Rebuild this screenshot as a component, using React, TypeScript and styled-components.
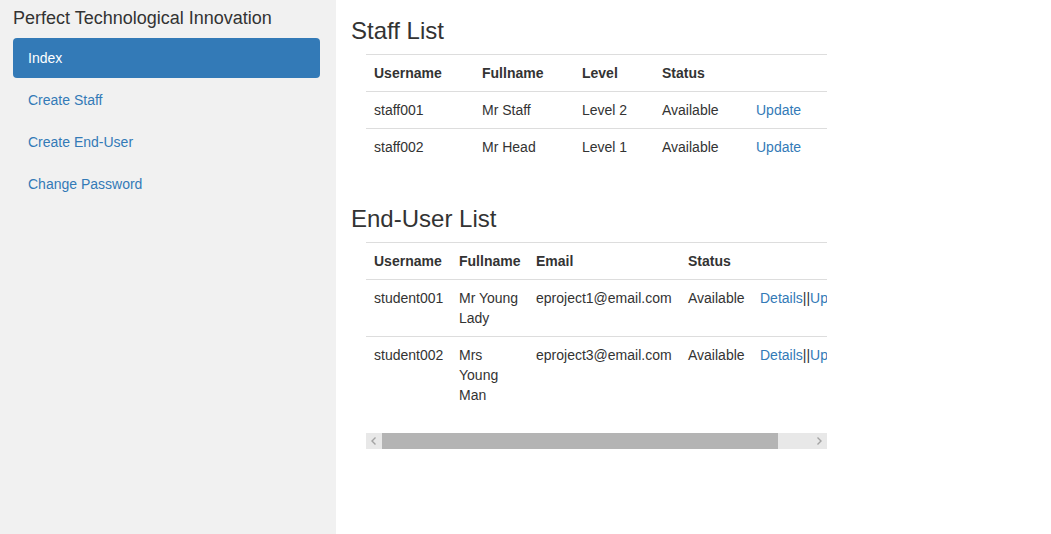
import styled, { createGlobalStyle } from "styled-components"

const GlobalStyle = createGlobalStyle`
    html, body {
        margin: 0;
        padding: 0;
        height: 100%;
    }
    body {
        font-family: "Liberation Sans", Arial, Helvetica, sans-serif;
        font-size: 14px;
        line-height: 20px;
        color: #333;
        background: #fff;
    }
    #root {
        height: 100%;
    }
`

const Page = styled.div`
    display: flex;
    min-height: 100vh;
`

const Sidebar = styled.aside`
    width: 336px;
    flex-shrink: 0;
    background: #f1f1f1;
    padding: 8px 16px 0 13px;
    box-sizing: border-box;
`

const Brand = styled.div`
    font-size: 18px;
    line-height: 20px;
    color: #333;
`

const Nav = styled.ul`
    list-style: none;
    margin: 10px 0 0;
    padding: 0;
`

const NavItem = styled.li`
    & + & {
        margin-top: 2px;
    }
`

const NavLink = styled.a<{ $active?: boolean }>`
    display: block;
    padding: 10px 15px;
    border-radius: 4px;
    text-decoration: none;
    color: ${props => (props.$active ? "#fff" : "#337ab7")};
    background: ${props => (props.$active ? "#337ab7" : "transparent")};
`

const Main = styled.main`
    flex: 1;
    padding-left: 15px;
    display: flow-root;
`

const Heading = styled.h3<{ $first?: boolean }>`
    font-size: 24px;
    font-weight: 500;
    line-height: 26px;
    margin: ${props => (props.$first ? "18px" : "21px")} 0 10px;
    color: #333;
`

const TableWrap = styled.div`
    width: 461px;
    margin-left: 15px;
    display: flow-root;
`

const TableViewport = styled.div`
    overflow: hidden;
`

const Table = styled.table<{ $width: number }>`
    width: ${props => props.$width}px;
    table-layout: fixed;
    border-collapse: collapse;
    border-spacing: 0;
    margin-bottom: 20px;
`

const Cell = styled.td`
    padding: 8px;
    border-top: 1px solid #ddd;
    vertical-align: top;
    text-align: left;
`

const HeadCell = styled(Cell).attrs({ as: "th" })`
    font-weight: bold;
`

const Link = styled.a`
    color: #337ab7;
    text-decoration: none;
`

const ScrollBar = styled.div`
    display: flex;
    height: 16px;
    background: #e8e8e8;
`

const ScrollButton = styled.div`
    width: 16px;
    flex-shrink: 0;
    display: flex;
    align-items: center;
    justify-content: center;
`

const ScrollTrack = styled.div`
    flex: 1;
    display: flex;
`

const ScrollThumb = styled.div`
    background: #b4b4b4;
    height: 100%;
`

const Chevron = ({ dir }: { dir: "left" | "right" }) => (
    <svg width="16" height="16" viewBox="0 0 16 16">
        <path
            d={dir === "left" ? "M9.5 4.5 6 8l3.5 3.5" : "M6.5 4.5 10 8l-3.5 3.5"}
            fill="none"
            stroke="#a3a3a3"
            strokeWidth="1.4"
        />
    </svg>
)

const staff = [
    { username: "staff001", fullname: "Mr Staff", level: "Level 2", status: "Available" },
    { username: "staff002", fullname: "Mr Head", level: "Level 1", status: "Available" },
]

const endUsers = [
    { username: "student001", fullname: "Mr Young Lady", email: "eproject1@email.com", status: "Available" },
    { username: "student002", fullname: "Mrs Young Man", email: "eproject3@email.com", status: "Available" },
]

const staffCols = [108, 100, 80, 94, 79]
const userCols = [85, 77, 152, 72, 113]
const viewWidth = 461
const userTableWidth = userCols.reduce((a, b) => a + b, 0)

export default function App() {
    return (
        <>
            <GlobalStyle />
            <Page>
                <Sidebar>
                    <Brand>Perfect Technological Innovation</Brand>
                    <Nav>
                        <NavItem><NavLink href="#" $active>Index</NavLink></NavItem>
                        <NavItem><NavLink href="#">Create Staff</NavLink></NavItem>
                        <NavItem><NavLink href="#">Create End-User</NavLink></NavItem>
                        <NavItem><NavLink href="#">Change Password</NavLink></NavItem>
                    </Nav>
                </Sidebar>
                <Main>
                    <Heading $first>Staff List</Heading>
                    <TableWrap>
                        <Table $width={viewWidth}>
                            <colgroup>
                                { staffCols.map((w, i) => <col key={i} style={{ width: w }} />) }
                            </colgroup>
                            <tbody>
                                <tr>
                                    <HeadCell>Username</HeadCell>
                                    <HeadCell>Fullname</HeadCell>
                                    <HeadCell>Level</HeadCell>
                                    <HeadCell>Status</HeadCell>
                                    <HeadCell />
                                </tr>
                                { staff.map(s => (
                                    <tr key={s.username}>
                                        <Cell>{ s.username }</Cell>
                                        <Cell>{ s.fullname }</Cell>
                                        <Cell>{ s.level }</Cell>
                                        <Cell>{ s.status }</Cell>
                                        <Cell><Link href="#">Update</Link></Cell>
                                    </tr>
                                )) }
                            </tbody>
                        </Table>
                    </TableWrap>

                    <Heading>End-User List</Heading>
                    <TableWrap>
                        <TableViewport>
                            <Table $width={userTableWidth}>
                                <colgroup>
                                    { userCols.map((w, i) => <col key={i} style={{ width: w }} />) }
                                </colgroup>
                                <tbody>
                                    <tr>
                                        <HeadCell>Username</HeadCell>
                                        <HeadCell>Fullname</HeadCell>
                                        <HeadCell>Email</HeadCell>
                                        <HeadCell>Status</HeadCell>
                                        <HeadCell />
                                    </tr>
                                    { endUsers.map(u => (
                                        <tr key={u.username}>
                                            <Cell>{ u.username }</Cell>
                                            <Cell>{ u.fullname }</Cell>
                                            <Cell>{ u.email }</Cell>
                                            <Cell>{ u.status }</Cell>
                                            <Cell>
                                                <Link href="#">Details</Link>||<Link href="#">Update</Link>
                                            </Cell>
                                        </tr>
                                    )) }
                                </tbody>
                            </Table>
                        </TableViewport>
                        <ScrollBar>
                            <ScrollButton><Chevron dir="left" /></ScrollButton>
                            <ScrollTrack>
                                <ScrollThumb style={{ width: `${(viewWidth / userTableWidth) * 100}%` }} />
                            </ScrollTrack>
                            <ScrollButton><Chevron dir="right" /></ScrollButton>
                        </ScrollBar>
                    </TableWrap>
                </Main>
            </Page>
        </>
    )
}
